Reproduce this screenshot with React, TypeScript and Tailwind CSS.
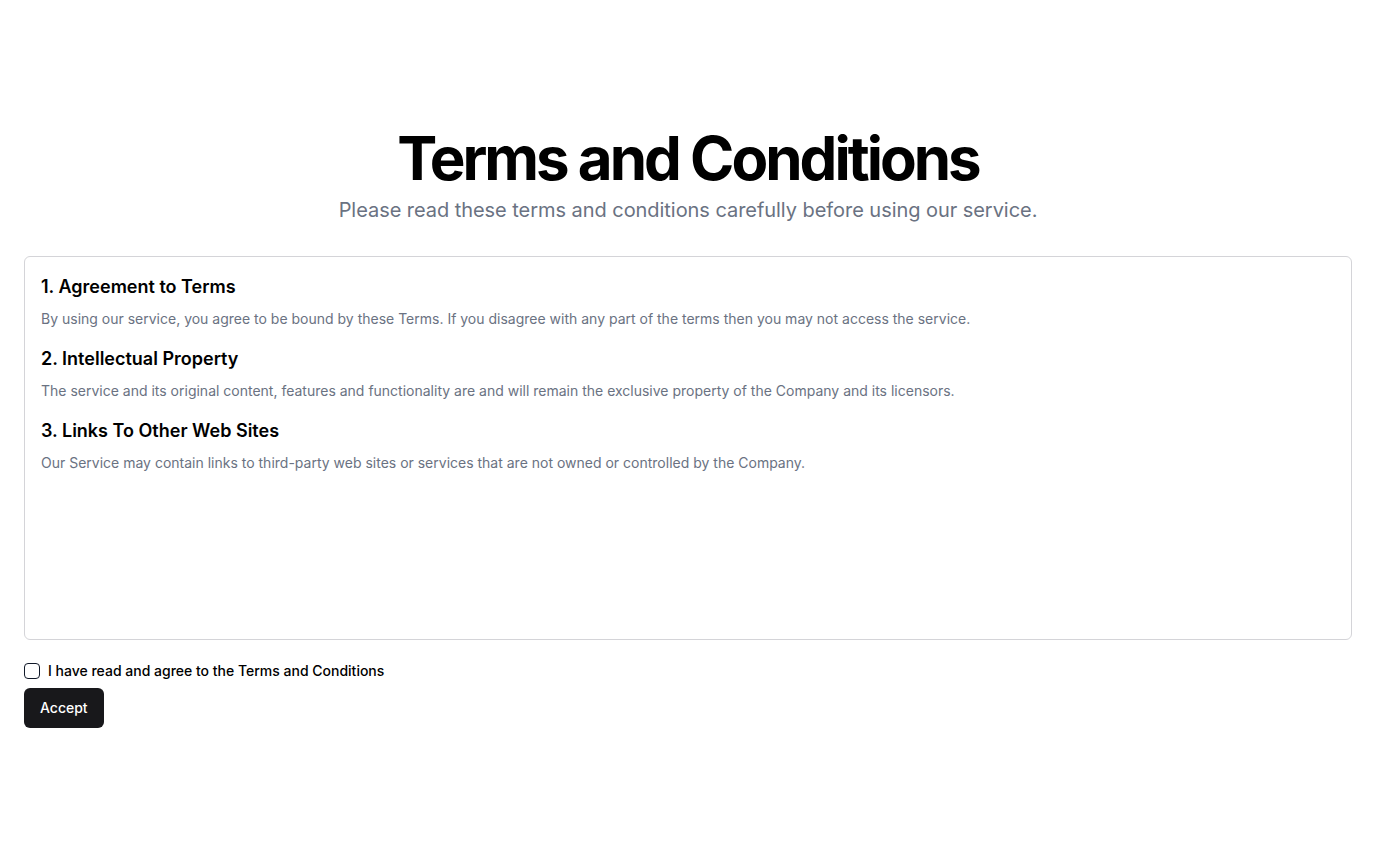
import React from "react";

const sections = [
  {
    title: "1. Agreement to Terms",
    body: "By using our service, you agree to be bound by these Terms. If you disagree with any part of the terms then you may not access the service.",
  },
  {
    title: "2. Intellectual Property",
    body: "The service and its original content, features and functionality are and will remain the exclusive property of the Company and its licensors.",
  },
  {
    title: "3. Links To Other Web Sites",
    body: "Our Service may contain links to third-party web sites or services that are not owned or controlled by the Company.",
  },
];

export default function App() {
  return (
    <div className="min-h-screen bg-white px-6 pt-32 font-['Inter',sans-serif] text-black">
      <h1 className="text-center text-6xl leading-[60px] font-bold tracking-tighter">Terms and Conditions</h1>
      <p className="mt-2 text-center text-xl leading-7 tracking-[-0.05px] text-gray-500">
        Please read these terms and conditions carefully before using our service.
      </p>
      <div className="mt-8 h-96 rounded-md border border-zinc-300 p-4">
        {sections.map((s) => (
          <div key={s.title} className="mb-4">
            <h2 className="text-lg leading-7 font-semibold">{s.title}</h2>
            <p className="mt-2 text-sm leading-5 text-gray-500">{s.body}</p>
          </div>
        ))}
      </div>
      <div className="mt-[21px] flex h-5 items-center gap-2">
        <input type="checkbox" className="h-4 w-4 appearance-none rounded-[4px] border border-gray-900 bg-white" />
        <label className="text-sm leading-5 font-medium">I have read and agree to the Terms and Conditions</label>
      </div>
      <button className="mt-[7px] h-10 rounded-md bg-zinc-900 px-4 text-sm font-medium text-white">Accept</button>
    </div>
  );
}
